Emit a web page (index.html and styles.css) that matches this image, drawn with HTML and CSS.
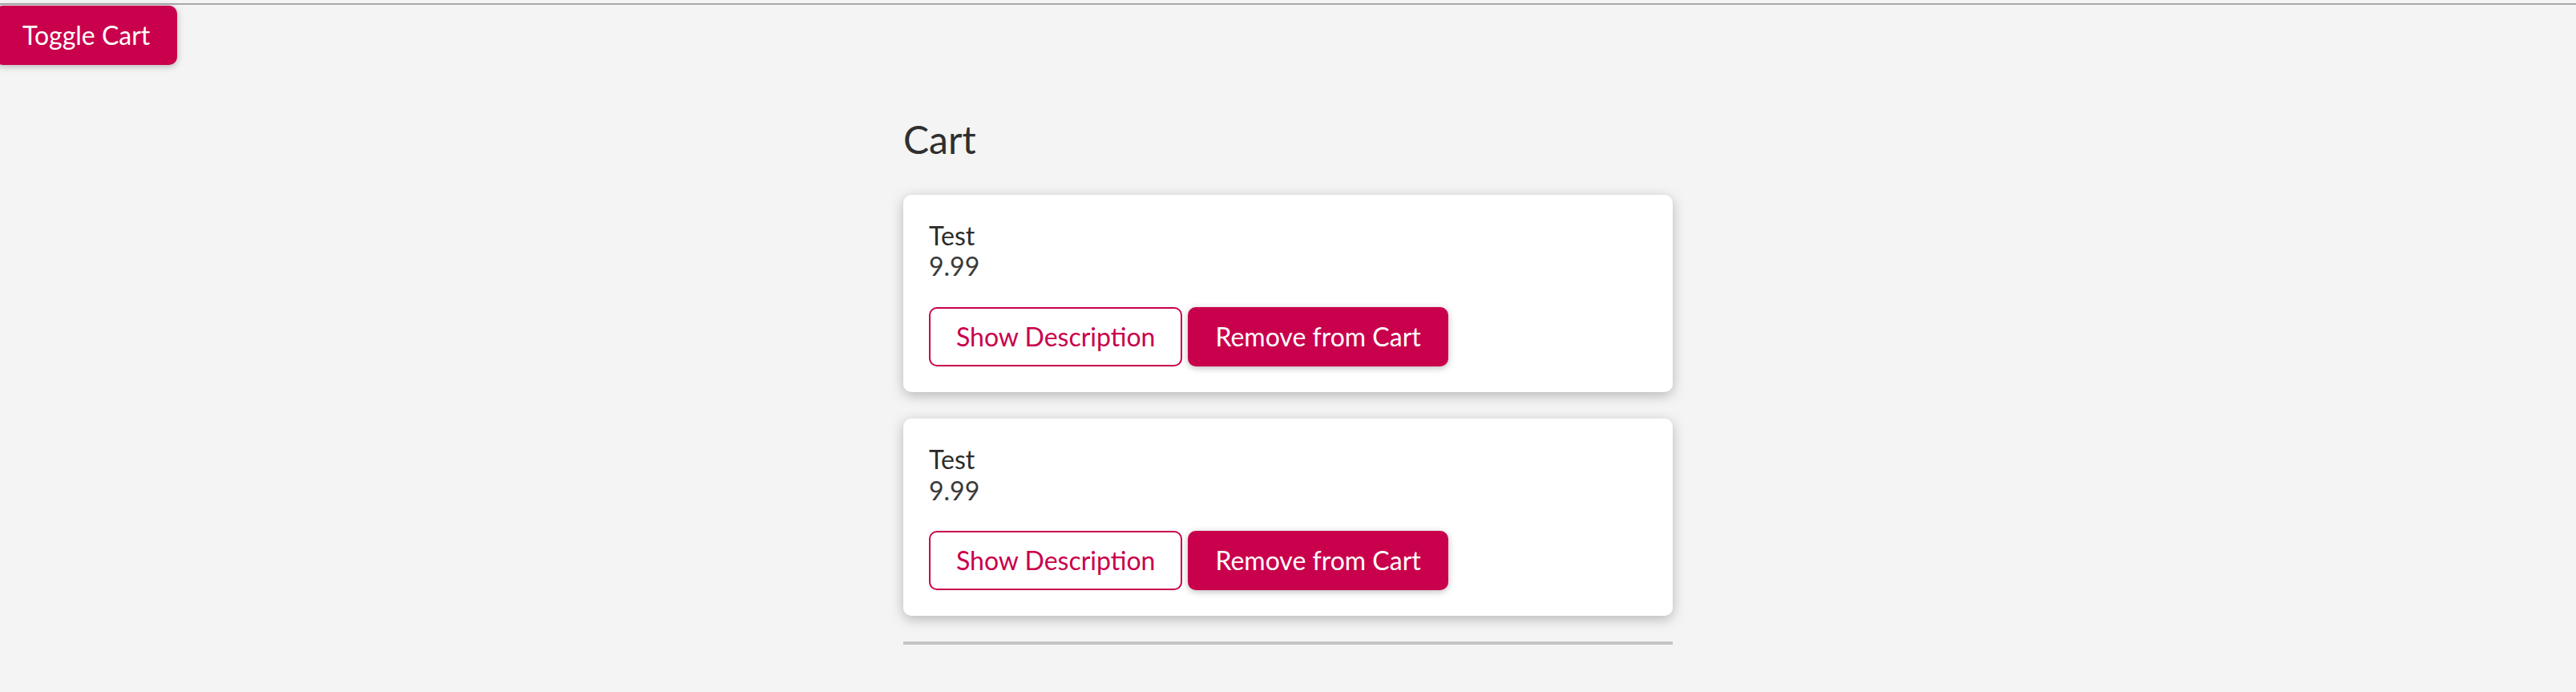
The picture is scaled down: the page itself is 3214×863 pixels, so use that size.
FILE: index.html
```html
<!DOCTYPE html>
<html lang="en">
<head>
<meta charset="utf-8">
<title>Cart</title>
<link rel="stylesheet" href="styles.css">
</head>
<body>
<div class="topline"></div>
<header class="toolbar">
  <button class="btn btn-solid btn-toggle">Toggle Cart</button>
</header>
<main class="cart">
  <h2 class="cart-title">Cart</h2>
  <ul class="cart-list">
    <li class="card">
      <div class="item-info">
        <div class="item-name">Test</div>
        <div class="item-price">9.99</div>
      </div>
      <div class="actions">
        <button class="btn btn-outline">Show Description</button>
        <button class="btn btn-solid">Remove from Cart</button>
      </div>
    </li>
    <li class="card">
      <div class="item-info">
        <div class="item-name">Test</div>
        <div class="item-price">9.99</div>
      </div>
      <div class="actions">
        <button class="btn btn-outline">Show Description</button>
        <button class="btn btn-solid">Remove from Cart</button>
      </div>
    </li>
  </ul>
  <hr class="divider">
</main>
</body>
</html>
```
FILE: styles.css
```css
html, body {
  margin: 0;
  padding: 0;
}

body {
  background: #f4f4f4;
  font-family: Lato, "Open Sans", "Liberation Sans", sans-serif;
  color: #2f2f2f;
  min-height: 863px;
}

.topline {
  height: 2px;
  margin-top: 4px;
  background: #a9a9a9;
}

.toolbar {
  display: flex;
  padding-top: 1px;
}

.btn {
  font-family: inherit;
  font-size: 32px;
  line-height: 38.4px;
  padding: 16px 32px;
  border: 2px solid #c9004c;
  border-radius: 10px;
  cursor: pointer;
  margin: 0;
}

.btn-solid {
  background: #c9004c;
  color: #ffffff;
  box-shadow: 0 2px 8px rgba(0, 0, 0, 0.26);
}

.btn-outline {
  background: #ffffff;
  color: #c9004c;
}

.btn-toggle {
  margin-left: -6px;
}

.cart {
  width: 960px;
  margin: 64px auto 0;
}

.cart-title {
  font-size: 48px;
  font-weight: 400;
  line-height: 57.6px;
  margin: 0 0 40px;
  color: #2f2f2f;
}

.cart-list {
  list-style: none;
  margin: 0;
  padding: 0;
  display: flex;
  flex-direction: column;
  gap: 33px;
}

.card {
  background: #ffffff;
  border-radius: 10px;
  padding: 32px;
  box-shadow: 0 4px 16px rgba(0, 0, 0, 0.26);
}

.item-info {
  font-size: 32px;
  line-height: 38.4px;
}

.item-name {
  color: #2b2b2b;
}

.item-price {
  color: #3a3a3a;
}

.actions {
  display: flex;
  gap: 7px;
  margin-top: 31px;
}

.divider {
  border: 0;
  height: 4px;
  background: #c4c4c4;
  margin: 32px 0 0;
}
```
